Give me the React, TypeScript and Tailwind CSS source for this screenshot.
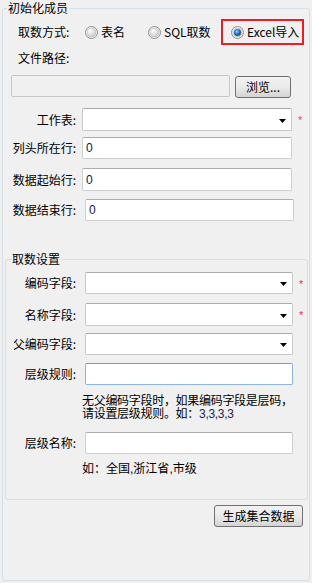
import React from "react";

function Radio({ checked }: { checked?: boolean }) {
  return (
    <svg width="13" height="13" viewBox="0 0 13 13" className="shrink-0">
      <defs>
        <radialGradient id="dot" cx="0.4" cy="0.35" r="0.7">
          <stop offset="0" stopColor="#9fd5ff" />
          <stop offset="0.5" stopColor="#2a7bd0" />
          <stop offset="1" stopColor="#0d3f7a" />
        </radialGradient>
        <radialGradient id="inner" cx="0.35" cy="0.3" r="0.8">
          <stop offset="0" stopColor="#ffffff" />
          <stop offset="1" stopColor="#c4c4c4" />
        </radialGradient>
      </defs>
      <circle cx="6.5" cy="6.5" r="6" fill="#f4f4f4" stroke="#8c8f94" strokeWidth="1" />
      <circle cx="6.5" cy="6.5" r="4.5" fill="url(#inner)" stroke="#b8b8b8" strokeWidth="0.6" />
      {checked && <circle cx="6.5" cy="6.5" r="3.3" fill="url(#dot)" stroke="#1f4f86" strokeWidth="0.5" />}
    </svg>
  );
}

function Arrow() {
  return (
    <svg width="8" height="5" viewBox="0 0 8 5" className="mt-[3px]">
      <path d="M0 0 H7 L3.5 4 Z" fill="#000" />
    </svg>
  );
}

function Combo({ ml = 0, h = 22, w = 210 }: { ml?: number; h?: number; w?: number }) {
  return (
    <div
      className="bg-white border border-[#c9c9c9] border-t-[#acacac] rounded-[2px] flex items-center justify-end pr-[4px]"
      style={{ marginLeft: ml, height: h, width: w }}
    >
      <Arrow />
    </div>
  );
}

function Input({ value, h = 22, w = 210, ml = 0, focus }: { value?: string; h?: number; w?: number; ml?: number; focus?: boolean }) {
  return (
    <div
      className={
        "bg-white rounded-[2px] flex items-center pl-[3px] font-['Liberation_Sans',sans-serif] text-[12px] text-[#10105a] border " +
        (focus ? "border-[#8cb4dc] border-t-[#6f9fcf]" : "border-[#cfcfcf] border-t-[#acacac]")
      }
      style={{ height: h, width: w, marginLeft: ml }}
    >
      {value}
    </div>
  );
}

function Label({ text, w, start }: { text: string; w: number; start: number }) {
  return (
    <div
      className="flex justify-end overflow-hidden whitespace-nowrap leading-[16px] shrink-0"
      style={{ width: w, marginLeft: start }}
    >
      <span>{text}</span>
    </div>
  );
}

function Star({ color }: { color: string }) {
  return (
    <span className="ml-[6px] text-[11px] leading-none mt-[2px] font-['Liberation_Sans',sans-serif]" style={{ color }}>
      *
    </span>
  );
}

export default function App() {
  return (
    <div className="w-[312px] h-[583px] bg-[#f0f0f0] pt-[8px] px-[2px] font-['Noto_Sans_CJK_SC','Noto_Sans',sans-serif] text-[12px] text-black overflow-hidden">
      <div className="h-[573px] border border-[#d5dfe5] rounded-[3px] flex flex-col">
        <div className="-mt-[9px] ml-[4px] w-fit px-[1px] bg-[#f0f0f0] leading-[16px]">初始化成员</div>

        {/* radio row */}
        <div className="mt-[3px] h-[26px] flex items-center">
          <div className="w-[82px] pl-[15px] leading-[16px] shrink-0">取数方式:</div>
          <div className="w-[63px] flex items-center gap-[3px] shrink-0">
            <Radio />
            <span>表名</span>
          </div>
          <div className="w-[73px] flex items-center gap-[3px] shrink-0">
            <Radio />
            <span>SQL取数</span>
          </div>
          <div className="w-[83px] h-[26px] border-2 border-[#ee1c25] flex items-center pl-[8px] gap-[3px] shrink-0">
            <Radio checked />
            <span>Excel导入</span>
          </div>
        </div>

        <div className="mt-[5px] pl-[15px] leading-[16px]">文件路径:</div>

        <div className="mt-[9px] flex items-start pl-[8px]">
          <div className="w-[219px] h-[22px] bg-[#f0f0f0] border border-[#c7c7c7] rounded-[2px]" />
          <button className="ml-[5px] mt-[1px] w-[56px] h-[22px] rounded-[3px] border border-[#707070] bg-gradient-to-b from-[#f2f2f2] via-[#ebebeb] to-[#d4d4d4] flex items-center justify-center leading-none">
            浏览...
          </button>
        </div>

        <div className="mt-[10px] flex items-center">
          <Label text="工作表:" w={73} start={0} />
          <Combo ml={6} h={23} />
          <Star color="#ff4a1a" />
        </div>

        <div className="mt-[6px] flex items-center">
          <Label text="列头所在行:" w={73} start={0} />
          <Input value="0" ml={6} h={22} w={210} />
        </div>

        <div className="mt-[9px] flex items-center">
          <Label text="数据起始行:" w={73} start={0} />
          <Input value="0" ml={6} h={23} w={210} />
        </div>

        <div className="mt-[8px] flex items-center">
          <Label text="数据结束行:" w={73} start={0} />
          <Input value="0" ml={9} h={22} w={209} />
        </div>

        {/* inner group */}
        <div className="mt-[38px] ml-[2px] mr-[1px] h-[241px] border border-[#d5dfe5] rounded-[3px] flex flex-col">
          <div className="-mt-[9px] ml-[5px] w-fit px-[1px] bg-[#f0f0f0] leading-[16px]">取数设置</div>

          <div className="mt-[5px] flex items-center">
            <Label text="编码字段:" w={70} start={0} />
            <Combo ml={9} h={22} w={208} />
            <Star color="#f0285a" />
          </div>

          <div className="mt-[9px] flex items-center">
            <Label text="名称字段:" w={70} start={0} />
            <Combo ml={9} h={23} w={208} />
            <Star color="#f0285a" />
          </div>

          <div className="mt-[7px] flex items-center">
            <Label text="父编码字段:" w={62} start={8} />
            <Combo ml={9} h={22} w={208} />
          </div>

          <div className="mt-[8px] flex items-center">
            <Label text="层级规则:" w={70} start={0} />
            <Input ml={9} h={22} w={208} focus />
          </div>

          <div className="mt-[8px] ml-[76px] leading-[13px] whitespace-nowrap tracking-[-0.3px]">
            <div>无父编码字段时，如果编码字段是层码，</div>
            <div>
              请设置层级规则。如：<span className="font-['Liberation_Sans',sans-serif] text-[#2a1e5c]">3,3,3,3</span>
            </div>
          </div>

          <div className="mt-[11px] flex items-center">
            <Label text="层级名称:" w={70} start={0} />
            <Input ml={9} h={22} w={208} />
          </div>

          <div className="mt-[8px] ml-[76px] leading-[12px] whitespace-nowrap">
            如：全国<span className="font-['Liberation_Sans',sans-serif]">,</span>浙江省<span className="font-['Liberation_Sans',sans-serif]">,</span>市级
          </div>
        </div>

        <div className="mt-[5px] flex">
          <button className="ml-[211px] w-[89px] h-[22px] rounded-[3px] border border-[#707070] bg-gradient-to-b from-[#f2f2f2] via-[#ebebeb] to-[#d4d4d4] flex items-center justify-center leading-none text-[12px]">
            生成集合数据
          </button>
        </div>
      </div>
    </div>
  );
}
